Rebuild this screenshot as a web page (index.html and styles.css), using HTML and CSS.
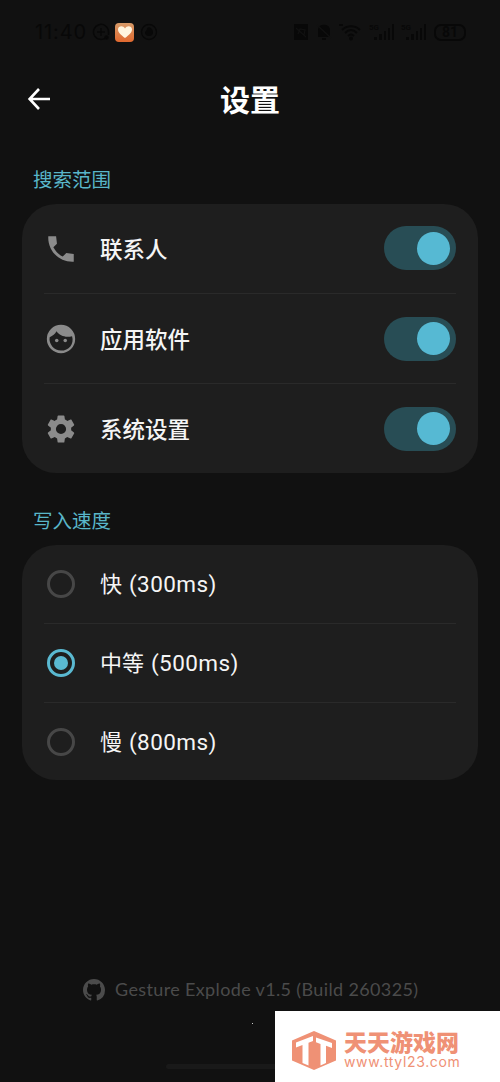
FILE: index.html
```html
<!DOCTYPE html>
<html lang="zh-CN">
<head>
<meta charset="utf-8">
<title>设置</title>
<link rel="stylesheet" href="styles.css">
</head>
<body>
<div class="screen">
  <header class="status">
    <span class="clock">11:40</span>
    <svg class="s-ico" width="18" height="18" viewBox="0 0 18 18" fill="none" stroke="currentColor" stroke-width="1.5"><path d="M14.5 14A7.5 7.5 0 1 1 16.5 9v3M5 9h8M9 5v8"/><circle cx="14.5" cy="14.5" r="1.5" fill="currentColor"/></svg>
    <span class="heart"><svg width="16" height="14" viewBox="0 0 16 14"><path d="M8 13C4 10 1 7.500 1 4.500 1 1 6 0 8 3.500 10 0 15 1 15 4.500 15 7.500 12 10 8 13Z" fill="#fff5df"/></svg></span>
    <svg class="s-ico" width="18" height="18" viewBox="0 0 18 18"><circle cx="9" cy="9" r="7.500" fill="none" stroke="currentColor" stroke-width="1.300"/><path d="M9 4c3 1 4 3 4 6 0 4-8 4-8 0 0-2 2-2 2-5z" fill="currentColor"/></svg>
    <div class="status-right">
      <svg width="16" height="18" viewBox="0 0 16 18"><path d="M1 1h14v16H1z" fill="currentColor"/><path d="M3 5l10 9M5 11l2-5 5 1-1 5" fill="none" stroke="#111" stroke-width="1.200"/></svg>
      <svg width="16" height="18" viewBox="0 0 16 18"><path d="M2 14V7c0-7 12-7 12 0v7zM6 15h4v2H6z" fill="currentColor"/><path d="M1 2l14 13" stroke="#111" stroke-width="1.300"/></svg>
      <svg class="wifi" width="24" height="18" viewBox="0 0 24 18" fill="none" stroke="currentColor" stroke-width="2"><path d="M4 7c5-5 13-5 18 0M7 10c4-4 8-4 12 0M10 13c2-2 4-2 6 0M1 2h4"/><circle cx="13" cy="15.500" r="1" fill="currentColor"/></svg>
      <svg width="26" height="18" viewBox="0 0 26 18"><text class="net" x="0" y="7">5G</text><path d="M5 14h3v3H5zM10 11h3v6h-3zM15 8h2v9h-2zM19 5h2v12h-2zM23 1h2v16h-2z" fill="currentColor"/></svg>
      <svg width="26" height="18" viewBox="0 0 26 18"><text class="net" x="0" y="7">5G</text><path d="M5 14h3v3H5zM10 11h3v6h-3zM15 8h2v9h-2zM19 5h2v12h-2zM23 1h2v16h-2z" fill="currentColor"/></svg>
      <span class="battery">81</span>
    </div>
  </header>

  <div class="topbar">
    <svg class="back" width="24" height="24" viewBox="0 0 24 24" fill="none" stroke="#fff" stroke-width="2.600"><path d="M12 2 2.600 12 12 22M2.600 12H23"/></svg>
    <h1>设置</h1>
  </div>

  <h2>搜索范围</h2>
  <section class="card">
    <div class="row">
      <svg class="icon" viewBox="0 0 24 24"><path d="M21 15.460l-5.270-.61-2.520 2.520c-2.830-1.440-5.150-3.750-6.590-6.590l2.530-2.530L8.540 3H3.030C2.450 13.180 10.820 21.550 21 20.970v-5.510z"/></svg>
      <span class="label">联系人</span><span class="switch"></span>
    </div>
    <div class="row">
      <svg class="icon" viewBox="0 0 24 24"><path fill-rule="evenodd" d="M12 2a10 10 0 1 0 0 20 10 10 0 0 0 0-20ZM12 20.200A8.200 8.200 0 0 1 4 10.700C6.200 9.900 7.800 8.500 8.800 6.600 11 9.800 15.500 11.300 19.800 10 21.500 15.500 17.500 20.200 12 20.200Z"/><circle cx="9" cy="13" r="1.250"/><circle cx="15" cy="13" r="1.250"/></svg>
      <span class="label">应用软件</span><span class="switch"></span>
    </div>
    <div class="row">
      <svg class="icon" viewBox="0 0 24 24"><path d="M19.140 12.940c.04-.3.060-.61.060-.94 0-.32-.02-.64-.07-.94l2.030-1.580c.18-.14.23-.41.120-.61l-1.920-3.320c-.12-.22-.37-.29-.59-.22l-2.390.960c-.5-.38-1.030-.7-1.620-.94L14.400 2.810c-.04-.24-.24-.41-.48-.41h-3.840c-.24 0-.43.170-.47.410l-.36 2.540c-.59.240-1.130.570-1.620.940l-2.390-.96c-.22-.08-.47 0-.59.220L2.740 8.870c-.12.210-.08.470.120.610l2.030 1.580c-.05.300-.09.630-.09.940s.02.640.070.940l-2.030 1.580c-.18.140-.23.410-.12.610l1.920 3.320c.12.220.37.290.59.220l2.390-.96c.5.380 1.030.700 1.620.940l.36 2.540c.05.240.24.410.48.410h3.840c.24 0 .44-.17.470-.41l.36-2.540c.59-.24 1.130-.56 1.620-.94l2.390.960c.22.080.47 0 .59-.22l1.920-3.320c.12-.22.070-.47-.12-.61l-2.010-1.580zM12 15.600A3.600 3.600 0 1 1 12 8.400a3.600 3.600 0 0 1 0 7.200z"/></svg>
      <span class="label">系统设置</span><span class="switch"></span>
    </div>
  </section>

  <h2 class="second">写入速度</h2>
  <section class="card speeds">
    <div class="row"><span class="radio"></span><span class="label">快 <span class="ms">(300ms)</span></span></div>
    <div class="row"><span class="radio on"></span><span class="label">中等 <span class="ms">(500ms)</span></span></div>
    <div class="row"><span class="radio"></span><span class="label">慢 <span class="ms">(800ms)</span></span></div>
  </section>

  <footer class="version">
    <svg width="22" height="22" viewBox="0 0 16 16"><path fill="currentColor" d="M8 0C3.580 0 0 3.580 0 8c0 3.540 2.290 6.530 5.470 7.590.4.070.55-.17.550-.38 0-.19-.01-.82-.01-1.490-2.010.370-2.530-.49-2.690-.94-.09-.23-.48-.94-.82-1.130-.28-.15-.68-.52-.01-.53.630-.01 1.080.580 1.230.820.720 1.210 1.870.870 2.330.660.070-.52.280-.87.510-1.070-1.780-.2-3.640-.89-3.640-3.950 0-.87.310-1.590.820-2.150-.08-.2-.36-1.020.080-2.120 0 0 .67-.21 2.200.820.640-.18 1.320-.27 2-.27s1.360.090 2 .27c1.530-1.040 2.200-.82 2.200-.82.440 1.100.160 1.920.080 2.120.510.560.820 1.270.820 2.150 0 3.070-1.870 3.750-3.650 3.950.290.250.540.730.540 1.480 0 1.070-.01 1.930-.01 2.200 0 .21.150.460.550.380A8.010 8.010 0 0 0 16 8c0-4.420-3.580-8-8-8z"/></svg>
    <span class="build">Gesture Explode v1.5 (Build 260325)</span>
  </footer>
  <div class="gesture-bar"></div>
  <i class="speck"></i>
  <aside class="brand">
    <svg width="44" height="39" viewBox="0 0 44 39"><path fill="#ef9175" d="M22 0 44 9.500V29.500L22 39 0 29.500V9.500Z"/><path fill="#fff" d="M4 11.500 21 5V10L16.500 11.700V34.500L10.500 32V14L4 16.500ZM24 6.500 40 12V17L34 14.800V32L28.500 34.500V13L24 11.300Z"/></svg>
    <div><strong>天天游戏网</strong><span>www.ttyl23.com</span></div>
  </aside>
</div>
</body>
</html>
```
FILE: styles.css
```css
* { box-sizing: border-box; }
body { margin: 0; background: #111; }
.screen {
  position: relative;
  width: 500px;
  height: 1082px;
  overflow: hidden;
  background: #111;
  color: #f5f5f5;
  font-family: "Noto Sans CJK SC", sans-serif;
}
.status {
  height: 64px;
  padding: 0 34px 0 35px;
  display: flex;
  align-items: center;
  color: #080808;
}
.clock { width: 57px; font: 20px/1 Inter, sans-serif; letter-spacing: .9px; }
.heart {
  width: 19px;
  height: 19px;
  margin: 0 6px 0 5px;
  display: grid;
  place-items: center;
  border-radius: 4px;
  background: linear-gradient(#d79a68, #e1692f);
}
.status-right { margin-left: auto; display: flex; align-items: center; gap: 6.600px; }
.net { font: bold 8px Roboto, sans-serif; fill: currentColor; }
.battery {
  width: 32px;
  height: 17px;
  border: 2px solid;
  border-radius: 7px;
  font: bold 14px/13px Roboto, sans-serif;
  text-align: center;
}
.topbar { height: 70px; display: grid; grid-template-columns: 1fr auto 1fr; align-items: center; padding: 0 27px; }
h1 { margin: -2px 0 0; font-size: 30px; line-height: 44px; font-weight: 700; color: #fff; }
h2 {
  margin: 0;
  padding: 31px 33px 0;
  height: 70px;
  font-size: 19.500px;
  line-height: 28px;
  font-weight: 400;
  color: #59b6c9;
}
h2.second { height: 72px; padding-top: 33px; }
.card { height: 269px; margin: 0 22px; padding: 0 22px; display: grid; grid-template-rows: 89px 90px 90px; border-radius: 34px; background: #1e1e1e; }
.speeds { height: 235px; grid-template-rows: 78px 79px 78px; }
.row { display: flex; align-items: center; }
.row + .row { border-top: 1px solid #2a2a2a; }
.icon { width: 34px; height: 34px; fill: #8b8b8b; }
.label { margin: -1px 0 0 22px; font-size: 22.500px; line-height: 34px; font-weight: 500; white-space: pre; }
.speeds .label { margin-top: -3px; font-weight: 400; font-size: 22px; }
.speeds .row:last-child .label { margin-top: -1px; }
.ms { margin-left: 2px; font-family: Roboto, sans-serif; font-size: 22.500px; letter-spacing: .45px; }
.switch { width: 72px; height: 44px; margin-left: auto; padding: 5.500px 6px; border-radius: 22px; background: #284d55; }
.switch::after { content: ""; display: block; width: 33px; height: 33px; margin-left: auto; border-radius: 50%; background: #56b9d3; }
.row:first-child .switch { margin-top: -1px; }
.radio { width: 28px; height: 28px; margin: 0 3px; border: 3px solid #474747; border-radius: 50%; display: grid; place-items: center; }
.radio.on { border-color: #5ab9d1; }
.radio.on::after { content: ""; width: 14px; height: 14px; border-radius: 50%; background: #5ab9d1; }
.version {
  height: 24px;
  margin: 198px 0 0 83px;
  display: flex;
  align-items: center;
  gap: 10px;
  color: #4b4b4b;
  font: 18px/24px Lato, sans-serif;
  letter-spacing: .36px;
  white-space: nowrap;
}
.build { margin-top: -2px; }
.gesture-bar { position: absolute; left: 166px; top: 1064px; width: 168px; height: 5px; border-radius: 3px; background: #191919; }
.speck { position: absolute; left: 252px; top: 1023px; width: 1px; height: 1px; background: #ccc; }
.brand {
  position: absolute;
  left: 275px;
  top: 1011px;
  width: 225px;
  height: 71px;
  padding: 20px 0 0 17px;
  display: flex;
  gap: 8px;
  background: #fff;
  color: #ef9175;
}
.brand div { margin-top: -2px; }
.brand strong { display: block; font-size: 23px; line-height: 24px; font-weight: 900; }
.brand span { display: block; margin-top: 2px; font: 14px/14px Inter, sans-serif; letter-spacing: .65px; white-space: nowrap; }
```
